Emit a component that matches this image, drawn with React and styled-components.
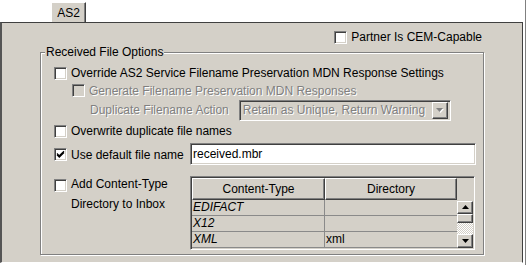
import React from "react";
import styled, { createGlobalStyle, css } from "styled-components";

const Global = createGlobalStyle`
  html, body {
    margin: 0;
    padding: 0;
    background: #fff;
  }
  body {
    font-family: "Liberation Sans", Arial, sans-serif;
    font-size: 12px;
    color: #000;
  }
`;

const FACE = "#d4d0c8";

const sunken = css`
  border: 1px solid;
  border-color: #808080 #fff #fff #808080;
  box-shadow: inset 1px 1px 0 #404040, inset -1px -1px 0 ${FACE};
`;

const raised = css`
  border: 1px solid;
  border-color: #fff #404040 #404040 #fff;
  box-shadow: inset -1px -1px 0 #808080;
`;

const Window = styled.div`
  width: 526px;
  border-right: 1px solid #808080;
  height: 265px;
  box-sizing: border-box;
`;

const TabStrip = styled.div`
  height: 22px;
  display: flex;
  align-items: flex-end;
  padding-left: 51px;
`;

const Tab = styled.div`
  width: 35px;
  height: 20px;
  box-sizing: border-box;
  background: ${FACE};
  border-top: 1px solid #fff;
  border-left: 1px solid #fff;
  border-right: 1px solid #404040;
  box-shadow: inset -1px 0 0 #808080;
  display: flex;
  align-items: center;
  justify-content: center;
`;

const Panel = styled.div`
  width: 523px;
  height: 241px;
  box-sizing: border-box;
  background: ${FACE};
  border-top: 1px solid #404040;
  border-left: 2px solid #555;
  border-right: 1px solid #404040;
  border-bottom: 1px solid #fff;
  padding: 5px 0 0 38px;
  display: flex;
  flex-direction: column;
`;

const PartnerRow = styled.div`
  width: 444px;
  height: 18px;
  display: flex;
  align-items: center;
  justify-content: flex-end;
  padding-right: 2px;
  box-sizing: border-box;
  gap: 4px;
  margin-bottom: 6px;
`;

const Group = styled.div`
  position: relative;
  width: 444px;
  height: 203px;
  box-sizing: border-box;
  border: 1px solid #808080;
  box-shadow: inset 1px 1px 0 #fff, 1px 1px 0 #fff;
  padding: 11px 0 4px 13px;
  display: flex;
  flex-direction: column;
`;

const Legend = styled.span`
  position: absolute;
  top: -8px;
  left: 4px;
  padding: 0 1px;
  background: ${FACE};
  line-height: 14px;
`;

const Row = styled.div`
  display: flex;
  align-items: center;
  gap: 4px;
  height: ${(p) => p.$h || 18}px;
  margin-top: ${(p) => p.$mt || 0}px;
  padding-left: ${(p) => p.$indent || 0}px;
  white-space: nowrap;
`;

const Box = styled.span`
  ${sunken};
  width: 13px;
  height: 13px;
  box-sizing: border-box;
  flex: none;
  background: ${(p) => (p.$disabled ? FACE : "#fff")};
  display: flex;
  align-items: center;
  justify-content: center;
  align-self: ${(p) => (p.$top ? "flex-start" : "center")};
  margin-top: ${(p) => (p.$top ? 3 : 0)}px;
`;

const Label = styled.span`
  color: ${(p) => (p.$disabled ? "#808080" : "#000")};
  text-shadow: ${(p) => (p.$disabled ? "1px 1px 0 #fff" : "none")};
  line-height: ${(p) => p.$lh || 14}px;
`;

const Check = ({ checked, disabled, top }) => (
  <Box $disabled={disabled} $top={top}>
    {checked && (
      <svg width="9" height="9" viewBox="0 0 9 9">
        <path d="M1 3.5 L3.3 5.8 L8 1.2 M1 4.8 L3.3 7.1 L8 2.5" stroke="#000" strokeWidth="1.2" fill="none" />
      </svg>
    )}
  </Box>
);

const Select = styled.div`
  ${sunken};
  width: 212px;
  height: 21px;
  box-sizing: border-box;
  margin-left: 6px;
  display: flex;
  align-items: center;
  padding: 2px;
  background: ${FACE};
`;

const SelectText = styled.span`
  flex: 1;
  color: #808080;
  text-shadow: 1px 1px 0 #fff;
  padding-left: 1px;
  overflow: hidden;
`;

const ArrowButton = styled.span`
  ${raised};
  width: 16px;
  height: 17px;
  box-sizing: border-box;
  background: ${FACE};
  display: flex;
  align-items: center;
  justify-content: center;
  flex: none;
`;

const Arrow = ({ up, color = "#000", shadow }) => (
  <svg width="7" height="5" viewBox="0 0 7 5" style={{ overflow: "visible" }}>
    {shadow && (
      <path d={up ? "M4.5 1 L8 5 L1 5 Z" : "M1 1 L8 1 L4.5 5 Z"} fill="#fff" />
    )}
    <path d={up ? "M3.5 0 L7 4 L0 4 Z" : "M0 0 L7 0 L3.5 4 Z"} fill={color} />
  </svg>
);

const FieldGrid = styled.div`
  display: grid;
  grid-template-columns: 136px 286px;
  margin-top: ${(p) => p.$mt || 0}px;
`;

const TextInput = styled.div`
  ${sunken};
  height: 22px;
  box-sizing: border-box;
  background: #fff;
  display: flex;
  align-items: center;
  padding-left: 2px;
`;

const StackLabel = styled.div`
  display: flex;
  gap: 4px;
  align-items: flex-start;
`;

const TableBox = styled.div`
  ${sunken};
  width: 285px;
  height: 74px;
  box-sizing: border-box;
  padding: 1px;
  display: grid;
  grid-template-columns: 1fr 16px;
  overflow: hidden;
  background: ${FACE};
`;

const Cells = styled.div`
  display: grid;
  grid-template-columns: 133px 1fr;
  grid-auto-rows: 16px;
  grid-template-rows: 22px;
  align-content: start;
  overflow: hidden;
`;

const HeadCell = styled.div`
  ${raised};
  background: ${FACE};
  display: flex;
  align-items: center;
  justify-content: center;
`;

const Cell = styled.div`
  border-bottom: 1px solid #8a8a8a;
  border-right: ${(p) => (p.$first ? "1px solid #8a8a8a" : "none")};
  font-style: ${(p) => (p.$italic ? "italic" : "normal")};
  line-height: 15px;
  padding-left: 1px;
  overflow: hidden;
`;

const ScrollBar = styled.div`
  display: flex;
  flex-direction: column;
  padding-top: 23px;
`;

const ScrollButton = styled.div`
  ${raised};
  height: ${(p) => p.$h}px;
  box-sizing: border-box;
  background: ${FACE};
  display: flex;
  align-items: center;
  justify-content: center;
  flex: none;
`;

const Track = styled.div`
  flex: 1;
  background-color: ${FACE};
  background-image: conic-gradient(#fff 25%, transparent 0 50%, #fff 0 75%, transparent 0);
  background-size: 2px 2px;
`;

const rows = [
  ["EDIFACT", ""],
  ["X12", ""],
  ["XML", "xml"],
  ["", ""],
];

export default function App() {
  return (
    <Window>
      <Global />
      <TabStrip>
        <Tab>AS2</Tab>
      </TabStrip>
      <Panel>
        <PartnerRow>
          <Check />
          <Label>Partner Is CEM-Capable</Label>
        </PartnerRow>
        <Group>
          <Legend>Received File Options</Legend>
          <Row $h={18}>
            <Check />
            <Label>Override AS2 Service Filename Preservation MDN Response Settings</Label>
          </Row>
          <Row $h={17} $indent={18}>
            <Check disabled />
            <Label $disabled>Generate Filename Preservation MDN Responses</Label>
          </Row>
          <Row $h={22} $indent={36}>
            <Label $disabled>Duplicate Filename Action</Label>
            <Select>
              <SelectText>Retain as Unique, Return Warning</SelectText>
              <ArrowButton>
                <Arrow color="#808080" shadow />
              </ArrowButton>
            </Select>
          </Row>
          <Row $h={18} $mt={1}>
            <Check />
            <Label>Overwrite duplicate file names</Label>
          </Row>
          <FieldGrid $mt={3}>
            <Row $h={23}>
              <Check checked />
              <Label>Use default file name</Label>
            </Row>
            <TextInput>received.mbr</TextInput>
          </FieldGrid>
          <FieldGrid $mt={10}>
            <StackLabel>
              <Check top />
              <Label $lh={20} style={{ marginTop: -2 }}>
                Add Content-Type
                <br />
                Directory to Inbox
              </Label>
            </StackLabel>
            <TableBox>
              <Cells>
                <HeadCell>Content-Type</HeadCell>
                <HeadCell>Directory</HeadCell>
                {rows.map(([type, dir], i) => (
                  <React.Fragment key={i}>
                    <Cell $first $italic>{type}</Cell>
                    <Cell>{dir}</Cell>
                  </React.Fragment>
                ))}
              </Cells>
              <ScrollBar>
                <ScrollButton $h={13}>
                  <Arrow up />
                </ScrollButton>
                <ScrollButton $h={9} />
                <Track />
                <ScrollButton $h={14}>
                  <Arrow />
                </ScrollButton>
              </ScrollBar>
            </TableBox>
          </FieldGrid>
        </Group>
      </Panel>
    </Window>
  );
}
